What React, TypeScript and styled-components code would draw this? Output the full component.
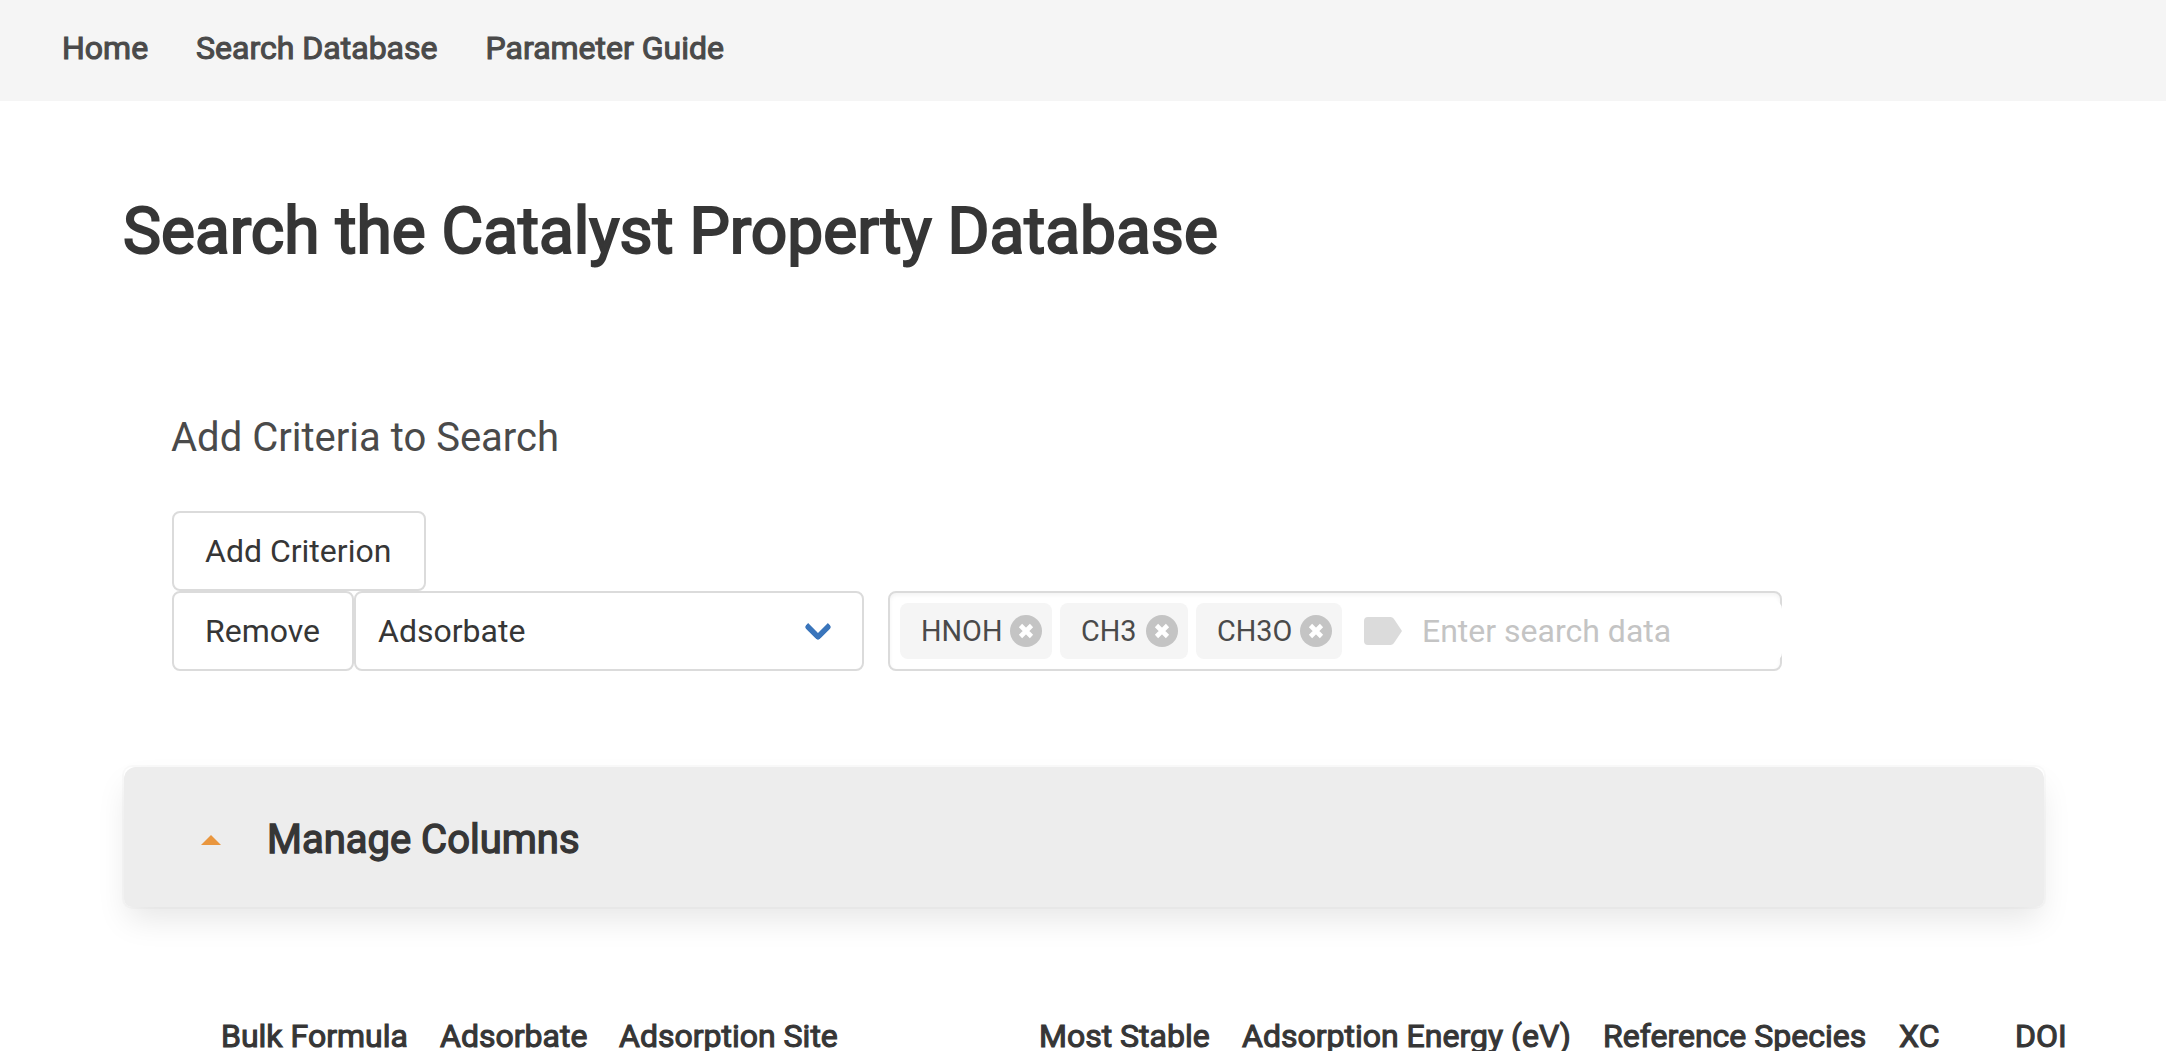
import React from "react";
import styled, { createGlobalStyle } from "styled-components";

const GlobalStyle = createGlobalStyle`
  *, *::before, *::after { box-sizing: border-box; }
  html { overflow: hidden; }
  body {
    margin: 0;
    background: #fff;
    color: #4a4a4a;
    font: 400 32px/48px Roboto, "Liberation Sans", sans-serif;
  }
`;

const Page = styled.div`
  height: 1051px;
  overflow: hidden;
`;

const NavBar = styled.nav`
  display: flex;
  align-items: center;
  gap: 48px;
  height: 101px;
  padding: 0 62px 6px;
  background: #f5f5f5;
`;

const NavLink = styled.a`
  color: #4a4a4a;
  white-space: nowrap;
  -webkit-text-stroke: 1.1px currentColor;
`;

const Content = styled.main`
  width: 1920px;
  margin: 95px 0 0 124px;
`;

const Title = styled.h1`
  margin: 0 0 0 -1px;
  color: #363636;
  font-size: 64px;
  font-weight: 400;
  line-height: 72px;
  white-space: nowrap;
  -webkit-text-stroke: 2.1px currentColor;
`;

const Criteria = styled.section`
  padding: 145px 48px 0;
`;

const Subtitle = styled.h2`
  margin: 0 0 48px -1px;
  font-size: 40px;
  font-weight: 400;
  line-height: 50px;
`;

const Button = styled.button<{ $width: number }>`
  display: block;
  flex: none;
  width: ${(p) => p.$width}px;
  height: 80px;
  padding: 0 0 0 31px;
  border: 2px solid #dbdbdb;
  border-radius: 8px;
  background: #fff;
  color: #363636;
  font: inherit;
  text-align: left;
  white-space: nowrap;
`;

const CriterionRow = styled.div`
  display: flex;
`;

const SelectBox = styled.div`
  display: flex;
  justify-content: space-between;
  align-items: center;
  width: 510px;
  height: 80px;
  padding: 0 34px 0 22px;
  border: 2px solid #dbdbdb;
  border-radius: 8px;
  background: #fff;
  color: #363636;
`;

const Chevron = styled.span`
  width: 20px;
  height: 20px;
  margin-bottom: 8px;
  border: 6px solid #3a75bb;
  border-top: 0;
  border-right: 0;
  border-radius: 4px;
  transform: rotate(-45deg);
`;

const TagInput = styled.div`
  position: relative;
  display: flex;
  align-items: center;
  width: 894px;
  height: 80px;
  margin-left: 24px;
  padding-left: 10px;
  border: 2px solid #dbdbdb;
  border-radius: 8px;
  background: #fff;
  box-shadow: inset 0 2px 4px rgba(10, 10, 10, 0.05);
`;

const Tag = styled.span<{ $width: number }>`
  display: flex;
  align-items: center;
  justify-content: space-between;
  width: ${(p) => p.$width}px;
  height: 56px;
  margin-right: 8px;
  padding: 0 10px 0 21px;
  border-radius: 8px;
  background: #f5f5f5;
  font-size: 28.8px;
`;

const RemoveIcon = styled.svg`
  display: block;
  flex: none;
  width: 32px;
  height: 32px;
`;

const LabelIcon = styled.svg`
  display: block;
  width: 38px;
  height: 28px;
  margin: 0 20px 0 14px;
`;

const Placeholder = styled.span`
  color: #c4c4c4;
`;

const EdgeMask = styled.span`
  position: absolute;
  top: 8px;
  right: -2px;
  width: 40px;
  height: 60px;
  border-radius: 8px;
  background: #fff;
`;

const Card = styled.section`
  height: 140px;
  margin-top: 96px;
  border-radius: 8px;
  background: #fff;
  box-shadow: 0 16px 32px -4px rgba(10, 10, 10, 0.1), 0 0 0 2px rgba(10, 10, 10, 0.02);
`;

const CardHeader = styled.header`
  display: flex;
  align-items: center;
  height: 100%;
  padding-left: 77px;
  border-radius: 12px 12px 8px 8px;
  background: #ededed;
`;

const Caret = styled.span`
  margin-top: 6px;
  border: solid transparent;
  border-width: 0 10px 10px;
  border-bottom-color: #e9963e;
`;

const CardTitle = styled.h3`
  margin: 6px 0 0 46px;
  color: #363636;
  font-size: 40px;
  font-weight: 400;
  line-height: 60px;
  white-space: nowrap;
  -webkit-text-stroke: 1.4px currentColor;
`;

const TableHead = styled.div`
  display: grid;
  grid-template-columns: 219px 179px 420px 203px 361px 296px 116px 60px;
  margin: 105px 0 0 97px;
`;

const HeadCell = styled.span`
  color: #363636;
  white-space: nowrap;
  -webkit-text-stroke: 1.1px currentColor;
`;

const tags = [
  { label: "HNOH", width: 152 },
  { label: "CH3", width: 128 },
  { label: "CH3O", width: 146 },
];

const columns = [
  "Bulk Formula",
  "Adsorbate",
  "Adsorption Site",
  "Most Stable",
  "Adsorption Energy (eV)",
  "Reference Species",
  "XC",
  "DOI",
];

export default function App() {
  return (
    <Page>
      <GlobalStyle />
      <NavBar>
        <NavLink>Home</NavLink>
        <NavLink>Search Database</NavLink>
        <NavLink>Parameter Guide</NavLink>
      </NavBar>
      <Content>
        <Title>Search the Catalyst Property Database</Title>
        <Criteria>
          <Subtitle>Add Criteria to Search</Subtitle>
          <Button $width={254}>Add Criterion</Button>
          <CriterionRow>
            <Button $width={182}>Remove</Button>
            <SelectBox>
              Adsorbate
              <Chevron />
            </SelectBox>
            <TagInput>
              {tags.map((tag) => (
                <Tag key={tag.label} $width={tag.width}>
                  {tag.label}
                  <RemoveIcon viewBox="0 0 32 32">
                    <circle cx="16" cy="16" r="16" fill="#c4c4c4" />
                    <path d="M10.5 10.5l11 11M21.5 10.5l-11 11" stroke="#fff" strokeWidth="4.6" />
                  </RemoveIcon>
                </Tag>
              ))}
              <LabelIcon viewBox="0 0 38 28">
                <path
                  d="M4 0H26.5Q28.5 0 29.8 1.8L38 14L29.8 26.2Q28.5 28 26.5 28H4Q0 28 0 24V4Q0 0 4 0Z"
                  fill="#dbdbdb"
                />
              </LabelIcon>
              <Placeholder>Enter search data</Placeholder>
              <EdgeMask />
            </TagInput>
          </CriterionRow>
        </Criteria>
        <Card>
          <CardHeader>
            <Caret />
            <CardTitle>Manage Columns</CardTitle>
          </CardHeader>
        </Card>
        <TableHead>
          {columns.map((name) => (
            <HeadCell key={name}>{name}</HeadCell>
          ))}
        </TableHead>
      </Content>
    </Page>
  );
}
